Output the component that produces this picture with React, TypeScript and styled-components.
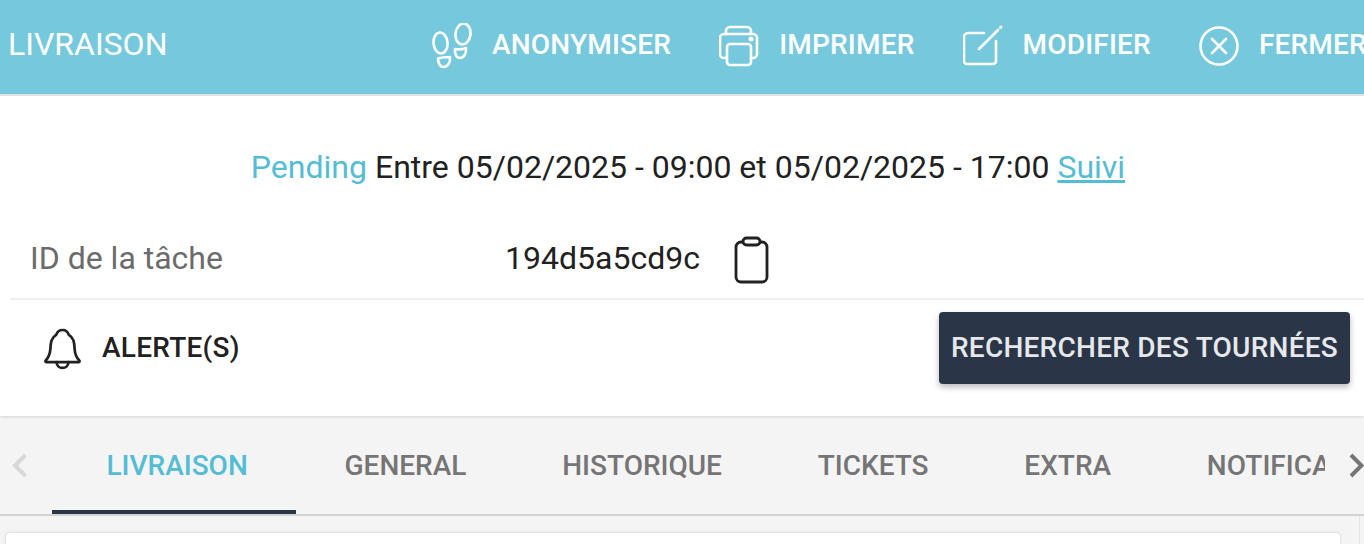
import React from "react";
import styled, { createGlobalStyle } from "styled-components";

const Global = createGlobalStyle`
  html, body { margin: 0; padding: 0; background: #f4f4f4; }
  body { font-family: Roboto, "Liberation Sans", sans-serif; width: 1364px; height: 544px; overflow: hidden; }
`;
const Page = styled.div`width: 1364px; height: 544px; overflow: hidden; display: flex; flex-direction: column;`;
const Header = styled.header`
  flex: 0 0 96px; box-sizing: border-box; padding-bottom: 3px; background: #76c9dc; color: #fff; display: flex; align-items: center;
  border-bottom: 2px solid #e4e4e4; overflow: hidden;
`;
const Title = styled.h1`
  flex: 0 0 424px; margin: 0 0 4px 8px; font-size: 32px; font-weight: 400; line-height: 1;
`;
const Actions = styled.div`display: flex; gap: 48px; flex: 0 0 auto;`;
const Action = styled.div`
  display: flex; align-items: center; gap: 20px; font-size: 28px; letter-spacing: .2px; font-weight: 500; white-space: nowrap;
`;
const ActionText = styled.span`margin-bottom: 2px;`;
const Icon = styled.svg`width: 40px; height: 46px; flex: 0 0 40px; fill: none; stroke: #fff; stroke-width: 2.6; stroke-linecap: round; stroke-linejoin: round;`;

const Panel = styled.section`
  flex: 0 0 320px; background: #fff; display: flex; flex-direction: column; padding-left: 10px;
  box-shadow: 0 1px 3px rgba(0,0,0,.12); position: relative;
`;
const Status = styled.div`
  height: 142px; display: flex; align-items: center; justify-content: center; gap: 8px; padding-left: 2px;
  font-size: 32px; color: #212121; white-space: nowrap;
`;
const Pending = styled.span`color: #55bcd5;`;
const Follow = styled.a`color: #55bcd5; text-decoration: underline;`;
const IdRow = styled.div`
  height: 61px; display: flex; align-items: flex-start; padding-left: 20px; border-bottom: 2px solid #f0f0f0;
  margin-top: -1px;
`;
const IdInner = styled.div`display: flex; align-items: center; height: 42px;`;
const Label = styled.span`flex: 0 0 475px; font-size: 32px; color: #6b6b6b;`;
const Value = styled.span`flex: 0 0 228px; font-size: 32px; color: #212121;`;
const ClipIcon = styled.svg`width: 38px; height: 48px; margin-top: 4px; fill: none; stroke: #212121; stroke-width: 2.8; stroke-linejoin: round;`;
const AlertRow = styled.div`
  flex: 1; display: flex; align-items: flex-start; padding: 12px 14px 0 34px;
`;
const AlertLabel = styled.div`
  display: flex; align-items: center; gap: 21px; height: 72px; font-size: 28px; letter-spacing: .25px; font-weight: 500; color: #212121;
`;
const AlertText = styled.span`margin-bottom: 2px;`;
const BellIcon = styled.svg`width: 37px; height: 45px; fill: none; stroke: #212121; stroke-width: 2.8; stroke-linejoin: round; stroke-linecap: round;`;
const SearchButton = styled.button`
  margin-left: auto; width: 411px; height: 72px; border: 0; border-radius: 4px; background: #2a3648; color: #e6e8eb;
  font: 500 28px Roboto, sans-serif; letter-spacing: .25px; padding: 0 0 2px; box-shadow: 0 3px 6px rgba(0,0,0,.28); white-space: nowrap;
`;

const TabBar = styled.nav`
  flex: 0 0 98px; display: flex; align-items: flex-start; border-bottom: 2px solid #d2d2d2; height: 98px;
`;
const Arrow = styled.svg<{ $muted?: boolean }>`
  flex: 0 0 16px; width: 16px; height: 26px; margin: 37px 0 0 ${(p) => (p.$muted ? "12px" : "0")}; fill: none;
  stroke: ${(p) => (p.$muted ? "#d8d8d8" : "#757575")}; stroke-width: 4;
`;
const TabScroller = styled.div`
  flex: 0 0 1273px; box-sizing: border-box; margin-left: 24px; margin-right: 23px; padding-left: 6.5px; height: 98px; overflow: hidden;
`;
const TabClip = styled.div`display: flex;`;
const Tab = styled.div<{ $active?: boolean }>`
  flex: 0 0 auto; padding: 0 47.9px; height: 98px; line-height: 100px; font-size: 28px; font-weight: 500; white-space: nowrap;
  color: ${(p) => (p.$active ? "#55bcd5" : "#757575")}; position: relative;
  &:first-child { padding-right: 48.9px; }
`;
const Indicator = styled.span`
  position: absolute; left: -6.5px; right: 1px; bottom: 0; height: 4px; background: #2a3648;
`;
const Body = styled.div`flex: 1; display: flex; padding: 17px 0 0 6px; position: relative;`;
const Card = styled.div`
  width: 1334px; height: 40px; background: #fff; border-radius: 4px; box-shadow: 0 0 3px rgba(0,0,0,.18);
`;
const Track = styled.div`
  position: absolute; top: 0; bottom: 0; left: 1359px; width: 1px; background: #e4e4e4;
`;

export default function App() {
  return (
    <Page>
      <Global />
      <Header>
        <Title>LIVRAISON</Title>
        <Actions>
          <Action>
            <Icon viewBox="0 0 40 46">
              <ellipse cx="8.5" cy="20" rx="7" ry="10.5" transform="rotate(-5 8.5 20)" />
              <path d="M6 35.5c3-1 8-1.500 12-1.500c.5 5-2 10-6.500 10c-3.500 0-5.500-4-5.500-8.500z" />
              <ellipse cx="31" cy="11" rx="7.500" ry="10.500" transform="rotate(8 31 11)" />
              <path d="M23 26c3.500.500 8 .500 11-1c.5 5-2 10-6 10c-3.500 0-5.500-4-5-9z" />
            </Icon>
            <ActionText>ANONYMISER</ActionText>
          </Action>
          <Action>
            <Icon viewBox="0 0 40 46">
              <path d="M7 11V8a4 4 0 0 1 4-4h17a4 4 0 0 1 4 4v3" />
              <path d="M8 35H5a4 4 0 0 1-4-4V15a4 4 0 0 1 4-4h29a4 4 0 0 1 4 4v16a4 4 0 0 1-4 4h-2" />
              <rect x="8" y="21" width="24" height="21" rx="3" />
              <circle cx="32" cy="16" r="1.200" fill="#fff" />
            </Icon>
            <ActionText>IMPRIMER</ActionText>
          </Action>
          <Action>
            <Icon viewBox="0 0 40 46">
              <path d="M21 10H5a4 4 0 0 0-4 4v24a3 3 0 0 0 3 3h26a3 3 0 0 0 3-3V18" />
              <path d="M16 26L35 7" />
              <path d="M37.500 4.500l.5-.5" strokeWidth="3" />
            </Icon>
            <ActionText>MODIFIER</ActionText>
          </Action>
          <Action>
            <Icon viewBox="0 0 40 46">
              <circle cx="20" cy="23" r="18.500" />
              <path d="M13 16l14 14M27 16L13 30" />
            </Icon>
            <ActionText>FERMER</ActionText>
          </Action>
        </Actions>
      </Header>
      <Panel>
        <Status>
          <Pending>Pending</Pending>
          <span>Entre 05/02/2025 - 09:00 et 05/02/2025 - 17:00</span>
          <Follow>Suivi</Follow>
        </Status>
        <IdRow>
          <IdInner>
            <Label>ID de la tâche</Label>
            <Value>194d5a5cd9c</Value>
            <ClipIcon viewBox="0 0 38 48">
              <path d="M10 6H8a5 5 0 0 0-5 5v30a5 5 0 0 0 5 5h21a5 5 0 0 0 5-5V11a5 5 0 0 0-5-5h-2" />
              <rect x="10" y="2" width="17" height="7" rx="3.500" />
            </ClipIcon>
          </IdInner>
        </IdRow>
        <AlertRow>
          <AlertLabel>
            <BellIcon viewBox="0 0 38 46">
              <path d="M2 35c3-3 4-5 4.500-11c.5-8 1-12 6-15c1-3 3-5 6.500-5s5.500 2 6.500 5c5 3 5.500 7 6 15c.5 6 1.500 8 4.500 11c1 1 .5 2-1 2H3c-1.500 0-2-1-1-2z" />
              <path d="M13 37c0 4 3 6 6 6s6-2 6-6" />
            </BellIcon>
            <AlertText>ALERTE(S)</AlertText>
          </AlertLabel>
          <SearchButton>RECHERCHER DES TOURNÉES</SearchButton>
        </AlertRow>
      </Panel>
      <TabBar>
        <Arrow $muted viewBox="0 0 16 26"><path d="M13.500 2L3 12.500 13.500 23" /></Arrow>
        <TabScroller>
          <TabClip>
            <Tab $active>LIVRAISON<Indicator /></Tab>
            <Tab>GENERAL</Tab>
            <Tab>HISTORIQUE</Tab>
            <Tab>TICKETS</Tab>
            <Tab>EXTRA</Tab>
            <Tab>NOTIFICATIONS</Tab>
          </TabClip>
        </TabScroller>
        <Arrow viewBox="0 0 16 26"><path d="M3 2l10.500 10.500L3 23" /></Arrow>
      </TabBar>
      <Body>
        <Card />
        <Track />
      </Body>
    </Page>
  );
}
